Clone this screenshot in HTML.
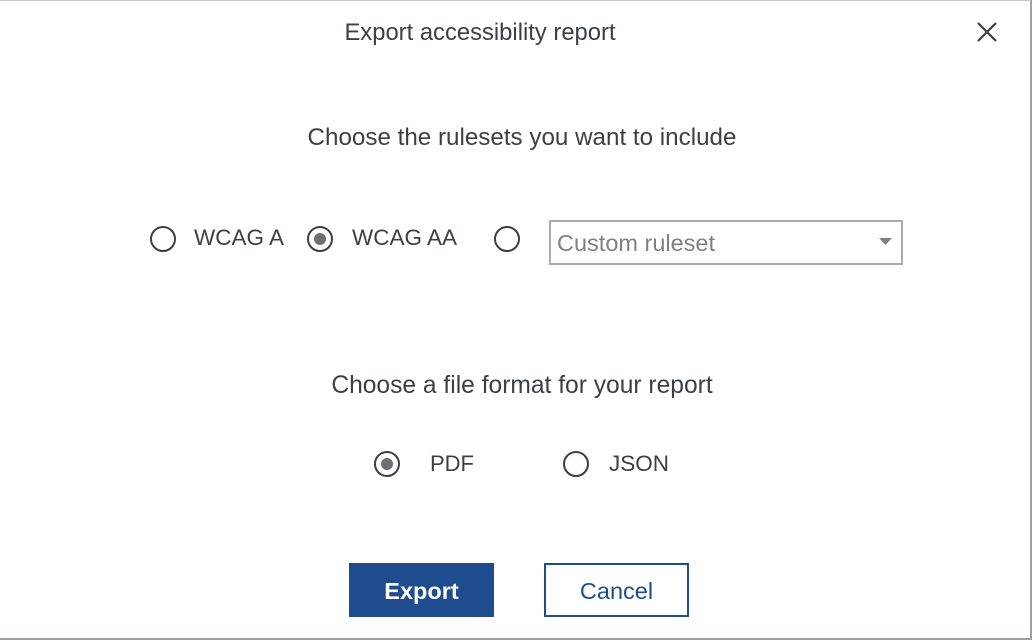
<!DOCTYPE html>
<html><head><meta charset="utf-8"><style>
html,body{margin:0;padding:0;}
body{width:1034px;height:642px;position:relative;background:#fff;font-family:"Segoe UI","Liberation Sans",sans-serif;color:#3b3f47;overflow:hidden;}
.frame{position:absolute;left:0;top:0;width:1032px;height:640px;border-right:2px solid #9aa0a6;border-bottom:2px solid #9aa0a6;border-top:1px solid #c8ccd0;box-sizing:border-box;}
.t{position:absolute;white-space:nowrap;}
.r{position:absolute;width:26px;height:26px;border:2px solid #3b3f47;border-radius:50%;box-sizing:border-box;}
.r.on::after{content:"";position:absolute;left:5px;top:5px;width:12px;height:12px;border-radius:50%;background:#6b7078;}
</style></head><body>
<div class="frame"></div>
<div class="t" style="left:0;width:960px;text-align:center;top:19px;font-size:23.8px;">Export accessibility report</div>
<svg style="position:absolute;left:975px;top:20px" width="24" height="24" viewBox="0 0 24 24"><path d="M3 3L21 21M21 3L3 21" stroke="#3b3f47" stroke-width="2.2" fill="none"/></svg>
<div class="t" style="left:0;width:1044px;text-align:center;top:124px;font-size:24.2px;">Choose the rulesets you want to include</div>
<div class="r" style="left:150px;top:226px"></div>
<div class="t" style="left:194px;top:225px;font-size:22.5px;">WCAG A</div>
<div class="r on" style="left:307px;top:226px"></div>
<div class="t" style="left:352px;top:225px;font-size:22.5px;">WCAG AA</div>
<div class="r" style="left:494px;top:226px"></div>
<div style="position:absolute;left:549px;top:220px;width:354px;height:45px;border:2px solid #a8abaf;box-sizing:border-box;"></div>
<div class="t" style="left:557px;top:230px;font-size:23.5px;color:#7d8187;">Custom ruleset</div>
<svg style="position:absolute;left:879px;top:238px" width="14" height="9"><path d="M0 0H13L6.5 7Z" fill="#7d8187"/></svg>
<div class="t" style="left:0;width:1044px;text-align:center;top:372px;font-size:24.6px;">Choose a file format for your report</div>
<div class="r on" style="left:374px;top:451px"></div>
<div class="t" style="left:430px;top:451px;font-size:22px;">PDF</div>
<div class="r" style="left:563px;top:451px"></div>
<div class="t" style="left:609px;top:451px;font-size:22.5px;">JSON</div>
<div style="position:absolute;left:349px;top:563px;width:145px;height:54px;background:#1f4b8f;color:#fff;font-weight:bold;font-size:23.5px;text-align:center;line-height:56px;">Export</div>
<div style="position:absolute;left:544px;top:563px;width:145px;height:54px;border:2px solid #1f4b8f;box-sizing:border-box;color:#1f4b8f;font-size:23.5px;text-align:center;line-height:52px;">Cancel</div>
</body></html>
